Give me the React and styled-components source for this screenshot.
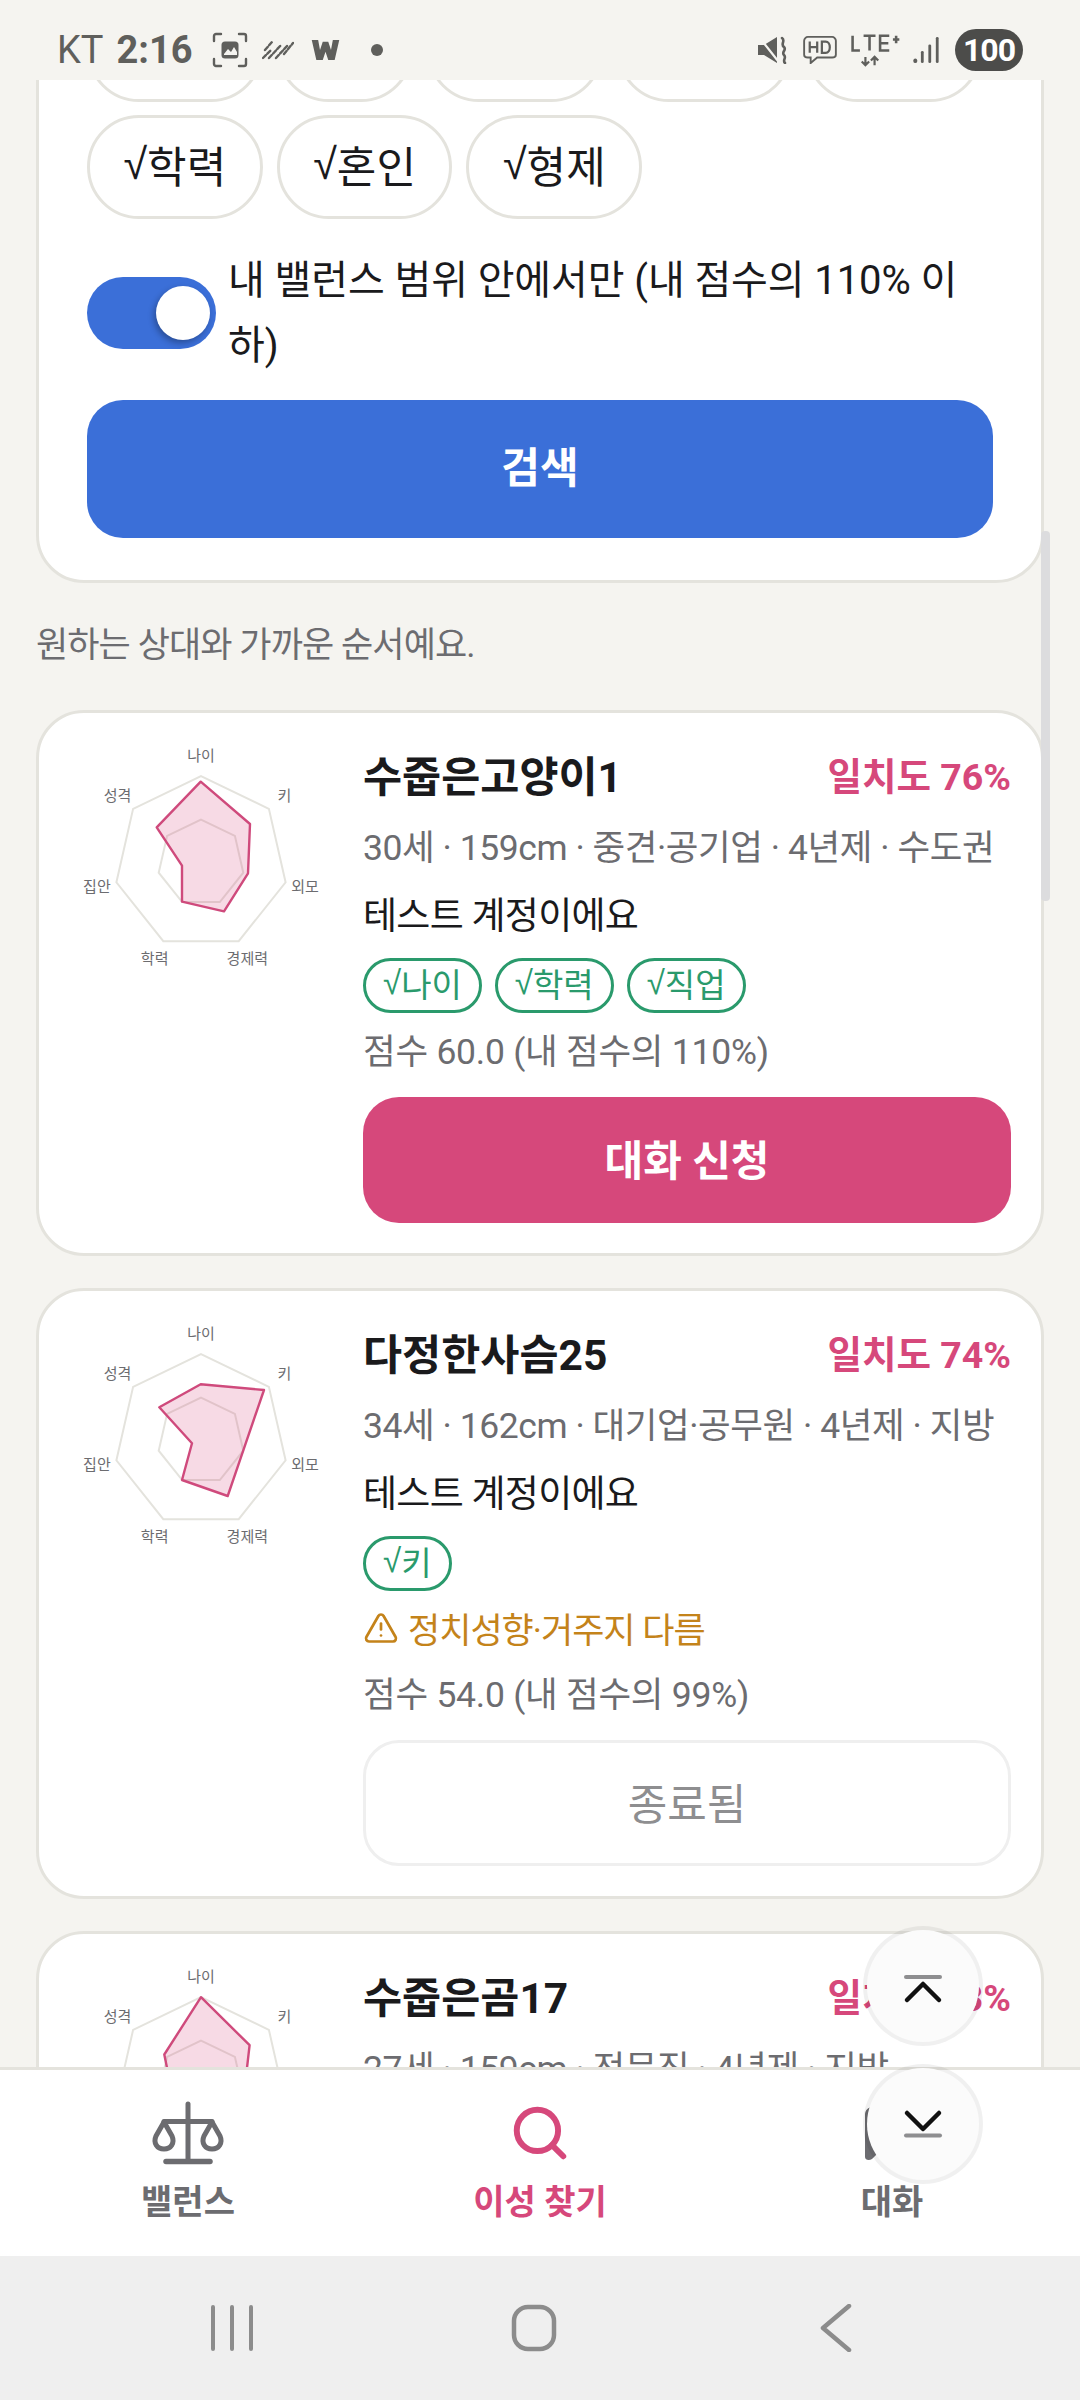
import styled, { createGlobalStyle } from "styled-components";
import { Search, TriangleAlert } from "lucide-react";

const GlobalStyle = createGlobalStyle`
  html, body {
    margin: 0;
    padding: 0;
    background: #f5f4f0;
  }
  * {
    box-sizing: border-box;
  }
  body {
    font-family: Roboto, "Noto Sans CJK KR", sans-serif;
  }
`;

const Screen = styled.div`
  position: relative;
  width: 1080px;
  height: 2400px;
  display: flex;
  flex-direction: column;
  overflow: hidden;
  background: #f5f4f0;
`;

const StatusBar = styled.div`
  height: 80px;
  flex: none;
  padding: 20px 57px 0 57px;
  display: flex;
  align-items: center;
  justify-content: space-between;
  background: #f5f4f0;
  color: #5f5f5c;
  position: relative;
  z-index: 2;
`;

const StatusSide = styled.div`
  display: flex;
  align-items: center;
`;

const Carrier = styled.span`
  font-size: 38px;
  font-weight: 400;
  margin-right: 13px;
`;

const Clock = styled.span`
  font-size: 38px;
  font-weight: 700;
  margin-right: 19px;
`;

const BatteryPill = styled.span`
  width: 68px;
  height: 42px;
  margin-left: 15px;
  border-radius: 21px;
  background: #4c4c4a;
  color: #fff;
  font-size: 32px;
  font-weight: 700;
  letter-spacing: -1px;
  display: flex;
  align-items: center;
  justify-content: center;
`;

const Scroller = styled.main`
  flex: 1;
  min-height: 0;
  overflow: hidden;
  padding: 0 36px;
`;

const ScrollInner = styled.div`
  margin-top: -113px;
  display: flex;
  flex-direction: column;
`;

const Panel = styled.section`
  background: #fff;
  border: 3px solid #e4e3dd;
  border-radius: 48px;
`;

const FilterPanel = styled(Panel)`
  padding: 28px 48px 42px;
`;

const FilterChips = styled.div`
  display: flex;
  flex-wrap: wrap;
  gap: 13px 14px;
`;

const FilterChip = styled.span`
  height: 104px;
  padding: 0 33.500px 6px;
  border: 3px solid #e4e3dd;
  border-radius: 52px;
  display: flex;
  align-items: center;
  font-size: 43px;
  color: #1a1a1c;
  white-space: nowrap;
`;

const CheckMark = styled.span`
  font-family: "Liberation Sans", sans-serif;
`;

const ToggleRow = styled.div`
  margin-top: 29px;
  display: flex;
  align-items: center;
  gap: 12px;
`;

const Toggle = styled.span`
  flex: none;
  width: 129px;
  height: 72px;
  padding: 9px 6px;
  border-radius: 36px;
  background: #3b6fd8;
  display: flex;
  justify-content: flex-end;
`;

const ToggleThumb = styled.span`
  width: 54px;
  height: 54px;
  border-radius: 50%;
  background: #fff;
  box-shadow: -2px 3px 6px rgb(0 0 0 / 30%);
`;

const ToggleLabel = styled.span`
  font-size: 40px;
  line-height: 65px;
  letter-spacing: -0.1px;
  color: #1a1a1c;
`;

const SearchButton = styled.div`
  margin-top: 22px;
  height: 138px;
  padding-bottom: 9px;
  border-radius: 36px;
  background: #3b6fd8;
  color: #fff;
  font-size: 42px;
  font-weight: 700;
  display: flex;
  align-items: center;
  justify-content: center;
`;

const Hint = styled.p`
  margin: 40px 0 0;
  height: 46px;
  line-height: 46px;
  font-size: 35px;
  letter-spacing: -0.9px;
  color: #6c6c70;
`;

const CardList = styled.div`
  margin-top: 41px;
  display: flex;
  flex-direction: column;
  gap: 32px;
`;

const Card = styled(Panel)`
  padding: 30px;
  display: flex;
  gap: 30px;
`;

const Radar = styled.svg`
  flex: none;
  width: 264px;
  height: 240px;
`;

const RadarLabel = styled.text`
  font-size: 15px;
  fill: #6c6c70;
  text-anchor: middle;
  dominant-baseline: central;
`;

const CardBody = styled.div`
  flex: 1;
  min-width: 0;
  display: flex;
  flex-direction: column;
`;

const TitleRow = styled.div`
  height: 66px;
  padding-bottom: 5px;
  display: flex;
  align-items: center;
  justify-content: space-between;
`;

const Name = styled.h2`
  margin: 0;
  font-size: 42.5px;
  font-weight: 700;
  color: #1a1a1c;
`;

const Match = styled.span`
  font-size: 37.5px;
  font-weight: 700;
  color: #d6487b;
`;

const Meta = styled.div`
  margin-top: 6px;
  height: 66px;
  line-height: 66px;
  font-size: 35.5px;
  letter-spacing: -0.45px;
  color: #6c6c70;
  white-space: nowrap;
`;

const Bio = styled.div`
  height: 68px;
  padding-top: 4px;
  line-height: 64px;
  font-size: 37px;
  letter-spacing: -0.7px;
  color: #1a1a1c;
`;

const MatchTags = styled.div`
  margin-top: 9px;
  display: flex;
  gap: 13px;
`;

const MatchTag = styled.span`
  height: 55px;
  padding: 0 17px 5px;
  border: 3px solid #2a9a6c;
  border-radius: 28px;
  display: flex;
  align-items: center;
  font-size: 33px;
  color: #2a9a6c;
`;

const Warning = styled.div`
  height: 65px;
  margin-top: 7px;
  padding-bottom: 6px;
  display: flex;
  align-items: center;
  gap: 9px;
  font-size: 35px;
  letter-spacing: -1px;
  color: #c4831a;
`;

const Score = styled.div`
  height: 65px;
  line-height: 65px;
  margin-top: ${({ $tight }) => ($tight ? 0 : 7)}px;
  font-size: 35.5px;
  letter-spacing: -0.25px;
  color: #6c6c70;
`;

const ApplyButton = styled.div`
  margin-top: 12px;
  height: 126px;
  padding-bottom: 5px;
  border-radius: 36px;
  background: #d6487b;
  color: #fff;
  font-size: 42px;
  font-weight: 700;
  display: flex;
  align-items: center;
  justify-content: center;
`;

const ClosedButton = styled(ApplyButton)`
  background: #fff;
  border: 3px solid #efefef;
  color: #8e8e90;
  font-size: 43px;
  font-weight: 400;
`;

const ScrollThumb = styled.div`
  position: absolute;
  top: 531px;
  right: 30px;
  width: 9px;
  height: 370px;
  border-radius: 4px;
  background: #dcdcde;
`;

const BottomNav = styled.nav`
  flex: none;
  height: 189px;
  padding: 30px 12px 0;
  display: grid;
  grid-template-columns: repeat(3, 1fr);
  background: #fff;
  border-top: 3px solid #e4e3dd;
  position: relative;
  z-index: 1;
`;

const NavItem = styled.div`
  display: flex;
  flex-direction: column;
  align-items: center;
  color: ${({ $active }) => ($active ? "#d6487b" : "#6c6c70")};
`;

const NavIconBox = styled.div`
  height: 66px;
  display: flex;
  align-items: center;
  justify-content: center;
`;

const NavLabel = styled.span`
  margin-top: 14px;
  font-size: 34px;
  font-weight: 700;
  line-height: 44px;
`;

const SystemBar = styled.div`
  flex: none;
  height: 144px;
  padding-left: 81px;
  display: grid;
  grid-template-columns: repeat(3, 302px);
  align-items: center;
  justify-items: center;
  background: #efefef;
  color: #8c8c8c;
`;

const JumpButton = styled.div`
  position: absolute;
  left: 863px;
  top: ${({ $top }) => $top}px;
  width: 120px;
  height: 120px;
  border-radius: 50%;
  background: #fbfbfb;
  background-clip: padding-box;
  border: 4px solid rgb(0 0 0 / 6%);
  z-index: 3;
  display: flex;
  align-items: center;
  justify-content: center;
`;

// seven axes, clockwise from the top
const axes = ["나이", "키", "외모", "경제력", "학력", "집안", "성격"];
const R = 86.8;
const point = (i, ratio) => {
  const a = (i * 2 * Math.PI) / 7;
  return [132 + Math.sin(a) * R * ratio, 120 - Math.cos(a) * R * ratio];
};
const ring = (ratio) =>
  axes.map((_, i) => point(i, ratio).map((n) => n.toFixed(1)).join(",")).join(" ");

function RadarChart({ points }) {
  return (
    <Radar viewBox="0 0 264 240">
      <polygon points={ring(1)} fill="none" stroke="#e4e3dd" strokeWidth="2" />
      <polygon points={ring(0.5)} fill="none" stroke="#e4e3dd" strokeWidth="2" />
      <polygon
        points={points}
        fill="#d6487b"
        fillOpacity="0.2"
        stroke="#cf4a7c"
        strokeWidth="2.4"
        strokeLinejoin="round"
      />
      {axes.map((label, i) => {
        const [x, y] = point(i, 1.23);
        return (
          <RadarLabel key={label} x={x} y={y}>
            {label}
          </RadarLabel>
        );
      })}
    </Radar>
  );
}

const profiles = [
  {
    name: "수줍은고양이1",
    match: 76,
    meta: "30세 · 159cm · 중견·공기업 · 4년제 · 수도권",
    tags: ["나이", "학력", "직업"],
    score: "점수 60.0 (내 점수의 110%)",
    points: "131.7,38.7 181,81 179,130.3 155,168.3 113,158.7 113,122.7 87.7,84.3",
  },
  {
    name: "다정한사슴25",
    match: 74,
    meta: "34세 · 162cm · 대기업·공무원 · 4년제 · 지방",
    tags: ["키"],
    warning: "정치성향·거주지 다름",
    score: "점수 54.0 (내 점수의 99%)",
    closed: true,
    points: "131.7,63.3 195,69 174.3,129.3 158.7,175 113,159 123,122.3 90.3,86.3",
  },
  {
    name: "수줍은곰17",
    match: 73,
    meta: "27세 · 159cm · 전문직 · 4년제 · 지방",
    tags: ["나이"],
    score: "점수 50.0 (내 점수의 92%)",
    points: "132,33.2 180.6,81.2 175,130 158,174 114.6,156 102.7,126.7 95.3,90.5",
  },
];

function ProfileCard({ profile }) {
  return (
    <Card>
      <RadarChart points={profile.points} />
      <CardBody>
        <TitleRow>
          <Name>{profile.name}</Name>
          <Match>일치도 {profile.match}%</Match>
        </TitleRow>
        <Meta>{profile.meta}</Meta>
        <Bio>테스트 계정이에요</Bio>
        <MatchTags>
          {profile.tags.map((tag) => (
            <MatchTag key={tag}>
              <CheckMark>√</CheckMark>
              {tag}
            </MatchTag>
          ))}
        </MatchTags>
        {profile.warning ? (
          <Warning>
            <TriangleAlert size={36} strokeWidth={1.8} />
            {profile.warning}
          </Warning>
        ) : null}
        <Score $tight={!!profile.warning}>{profile.score}</Score>
        {profile.closed ? (
          <ClosedButton>종료됨</ClosedButton>
        ) : (
          <ApplyButton>대화 신청</ApplyButton>
        )}
      </CardBody>
    </Card>
  );
}

function BalanceIcon() {
  return (
    <svg width="76" height="64" viewBox="0 0 76 64" fill="none" stroke="#6c6c70" strokeWidth="5" strokeLinecap="round" strokeLinejoin="round">
      <path d="M38 3V60" />
      <path d="M16 60.500H60" strokeWidth="5.500" />
      <path d="M14 20.500H62" />
      <path d="M14 21L6 35C3 42 7 48 14 48C21 48 25 42 22 35Z" />
      <path d="M62 21L54 35C51 42 55 48 62 48C69 48 73 42 70 35Z" />
    </svg>
  );
}

function ChatIcon() {
  return (
    <svg width="58" height="58" viewBox="0 0 58 58">
      <path d="M10 3H48C53 3 56 6 56 11V38C56 43 53 46 48 46H18L9 55C6 57 2 56 2 53V11C2 6 5 3 10 3Z" fill="#6c6c70" />
    </svg>
  );
}

function StatusIconsLeft() {
  return (
    <>
      <svg width="36" height="36" viewBox="0 0 36 36" fill="none" stroke="#5f5f5c" strokeWidth="2.400" strokeLinecap="round">
        <path d="M2 9V4C2 3 3 2 4 2H9M27 2H32C33 2 34 3 34 4V9M34 27V32C34 33 33 34 32 34H27M9 34H4C3 34 2 33 2 32V27" />
        <rect x="9.500" y="9.500" width="17" height="17" rx="3.500" fill="#5f5f5c" stroke="none" />
        <path d="M12 22L16 17L19 20L22 15L25 20V23H12Z" fill="#f5f4f0" stroke="none" />
      </svg>
      <svg width="32" height="20" viewBox="0 0 32 20" fill="none" stroke="#5f5f5c" strokeWidth="2.400" strokeLinecap="round" strokeDasharray="4 2.200" style={{ marginLeft: 14 }}>
        <path d="M1 18L9 10M7 18L19 5M14 18L25 6M22 14L31 3M3 10L10 2" />
      </svg>
      <svg width="29" height="22" viewBox="0 0 30 24" fill="#5f5f5c" style={{ marginLeft: 17 }}>
        <path d="M0 1H7L9 12L12 3H18L21 12L23 1H30L25 23H18L15 14L12 23H5Z" />
      </svg>
      <svg width="12" height="12" viewBox="0 0 12 12" fill="#5f5f5c" style={{ marginLeft: 31 }}>
        <circle cx="6" cy="6" r="6" />
      </svg>
    </>
  );
}

function StatusIconsRight() {
  return (
    <>
      <svg width="30" height="28" viewBox="0 0 30 28" fill="none" stroke="#5f5f5c" strokeWidth="2.600" strokeLinecap="round">
        <path d="M0 9H6L19 1V27L6 19H0Z" fill="#5f5f5c" stroke="none" />
        <path d="M1 1L20 25" stroke="#f5f4f0" strokeWidth="2.200" />
        <path d="M24 2C28 5 22 8 26 11C29 14 23 16 26 19C29 22 24 24 27 27" />
      </svg>
      <svg width="34" height="28" viewBox="0 0 36 30" fill="none" stroke="#5f5f5c" strokeWidth="2" style={{ marginLeft: 15 }}>
        <path d="M5 1H31C33 1 35 3 35 5V20C35 22 33 23 31 23H15L8 29V23H5C3 23 1 22 1 20V5C1 3 3 1 5 1Z" />
        <path d="M7 6V18M7 12H15M15 6V18M20 6V18H24C30 18 30 6 24 6H20Z" strokeWidth="2.400" />
      </svg>
      <svg width="53" height="33" viewBox="0 0 54 36" fill="none" stroke="#5f5f5c" strokeWidth="2.800" style={{ marginLeft: 12 }}>
        <path d="M2 2V18H10M14 2H27M20.500 2V18M42 2H32V18H42M32 10H41M46 6H53M49.500 2V10" />
        <path d="M16 25V34M12 30L16 34L20 30M26 34V25M22 29L26 25L30 29" strokeWidth="2.400" />
      </svg>
      <svg width="27" height="28" viewBox="0 0 28 30" fill="#5f5f5c" style={{ marginLeft: 11 }}>
        <rect x="0" y="24" width="4" height="5" rx="2" />
        <rect x="8" y="16" width="3" height="13" rx="1.500" />
        <rect x="16" y="9" width="3" height="20" rx="1.500" />
        <rect x="24" y="1" width="3" height="28" rx="1.500" />
      </svg>
      <BatteryPill>100</BatteryPill>
    </>
  );
}

function FilterTag({ label }) {
  return (
    <FilterChip>
      <CheckMark>√</CheckMark>
      {label}
    </FilterChip>
  );
}

export default function App() {
  return (
    <>
      <GlobalStyle />
      <Screen>
        <StatusBar>
          <StatusSide>
            <Carrier>KT</Carrier>
            <Clock>2:16</Clock>
            <StatusIconsLeft />
          </StatusSide>
          <StatusSide>
            <StatusIconsRight />
          </StatusSide>
        </StatusBar>

        <Scroller>
          <ScrollInner>
            <FilterPanel>
              <FilterChips>
                <FilterTag label="나이" />
                <FilterTag label="키" />
                <FilterTag label="직업" />
                <FilterTag label="지역" />
                <FilterTag label="외모" />
                <FilterTag label="학력" />
                <FilterTag label="혼인" />
                <FilterTag label="형제" />
              </FilterChips>
              <ToggleRow>
                <Toggle>
                  <ToggleThumb />
                </Toggle>
                <ToggleLabel>내 밸런스 범위 안에서만 (내 점수의 110% 이하)</ToggleLabel>
              </ToggleRow>
              <SearchButton>검색</SearchButton>
            </FilterPanel>
            <Hint>원하는 상대와 가까운 순서예요.</Hint>
            <CardList>
              {profiles.map((profile) => (
                <ProfileCard key={profile.name} profile={profile} />
              ))}
            </CardList>
          </ScrollInner>
        </Scroller>

        <ScrollThumb />

        <BottomNav>
          <NavItem>
            <NavIconBox>
              <BalanceIcon />
            </NavIconBox>
            <NavLabel>밸런스</NavLabel>
          </NavItem>
          <NavItem $active>
            <NavIconBox>
              <Search size={62} strokeWidth={2.3} />
            </NavIconBox>
            <NavLabel>이성 찾기</NavLabel>
          </NavItem>
          <NavItem>
            <NavIconBox>
              <ChatIcon />
            </NavIconBox>
            <NavLabel>대화</NavLabel>
          </NavItem>
        </BottomNav>

        <SystemBar>
          <svg width="44" height="46" viewBox="0 0 44 46" fill="none" stroke="currentColor" strokeWidth="4" strokeLinecap="round">
            <path d="M3 2V44M22 2V44M41 2V44" />
          </svg>
          <svg width="46" height="48" viewBox="0 0 46 48" fill="none" stroke="currentColor" strokeWidth="4.500">
            <rect x="3" y="3" width="40" height="42" rx="14" />
          </svg>
          <svg width="32" height="48" viewBox="0 0 32 48" fill="none" stroke="currentColor" strokeWidth="4.500" strokeLinecap="round" strokeLinejoin="round">
            <path d="M29 2L3 24L29 46" />
          </svg>
        </SystemBar>

        <JumpButton $top={1926}>
          <svg width="40" height="50" viewBox="0 0 40 50" fill="none" strokeLinecap="round">
            <path d="M3 16H37" stroke="#8e8e90" strokeWidth="4" />
            <path d="M4 39L20 23L36 39" stroke="#111" strokeWidth="4.500" strokeLinejoin="round" />
          </svg>
        </JumpButton>
        <JumpButton $top={2064}>
          <svg width="40" height="50" viewBox="0 0 40 50" fill="none" strokeLinecap="round">
            <path d="M3 36.500H37" stroke="#8e8e90" strokeWidth="4" />
            <path d="M4 14L20 30L36 14" stroke="#111" strokeWidth="4.500" strokeLinejoin="round" />
          </svg>
        </JumpButton>
      </Screen>
    </>
  );
}
